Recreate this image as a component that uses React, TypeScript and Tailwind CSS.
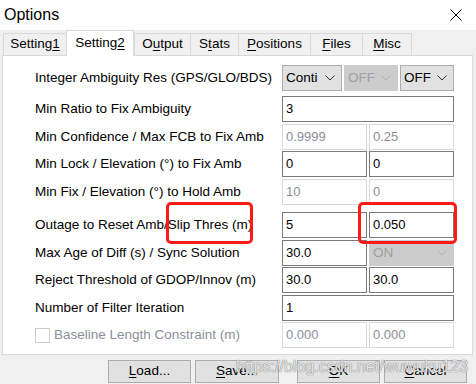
import React from 'react';

// Options dialog, "Setting2" tab

const Chevron = ({ color = '#333' }: { color?: string }) => (
  <svg width="10" height="6" viewBox="0 0 10 6" fill="none">
    <path d="M0.5 0.5 L5 5 L9.5 0.5" stroke={color} strokeWidth="1" />
  </svg>
);

const U = ({ children }: { children: React.ReactNode }) => <span className="underline underline-offset-2">{children}</span>;

interface TabProps {
  w: string;
  active?: boolean;
  last?: boolean;
  children: React.ReactNode;
}

const Tab = ({ w, active, last, children }: TabProps) => (
  <div
    className={`${w} flex items-center justify-center text-[13.5px] border-t border-l border-[#d9d9d9] ${
      active ? 'h-[26px] bg-white border-r -mb-px relative z-10' : 'h-[22px] bg-[#f0f0f0]'
    } ${last ? 'border-r' : ''}`}
  >
    <span>{children}</span>
  </div>
);

const Input = ({ value, w, disabled }: { value: string; w: string; disabled?: boolean }) => (
  <div
    className={`${w} h-full flex items-center px-[3px] text-[13px] border ${
      disabled ? 'border-[#d9d9d9] text-[#8a8f99]' : 'border-[#7a7a7a] text-black'
    }`}
  >
    {value}
  </div>
);

const Select = ({ value, w, disabled }: { value: string; w: string; disabled?: boolean }) => (
  <div
    className={`${w} h-full flex items-center justify-between pl-[3px] pr-[6px] text-[13.5px] border ${
      disabled ? 'bg-[#cccccc] border-[#cccccc] text-[#a0a0a0]' : 'bg-[#e1e1e1] border-[#adadad] text-black'
    }`}
  >
    <span>{value}</span>
    <Chevron color={disabled ? '#b0b0b0' : '#333'} />
  </div>
);

const Row = ({ label, mt, h = 'h-[26px]', children }: { label: React.ReactNode; mt: string; h?: string; children: React.ReactNode }) => (
  <div className={`flex items-center ${mt} ${h}`}>
    <div className="w-[247px] text-[13.5px] text-black whitespace-nowrap">{label}</div>
    <div className="flex h-full gap-[2px]">{children}</div>
  </div>
);

const Button = ({ children, w, ml }: { children: React.ReactNode; w: string; ml: string }) => (
  <div className={`${w} ${ml} h-[23px] flex items-center justify-center bg-[#e1e1e1] border border-[#adadad] text-[13.5px]`}>
    {children}
  </div>
);

export default function App() {
  return (
    <div className="relative w-[476px] h-[384px] overflow-hidden bg-[#f0f0f0] text-black font-['Liberation_Sans',Arial,sans-serif]">
      {/* title bar */}
      <div className="h-[30px] bg-white flex items-center justify-between pl-[4px] pr-[14px]">
        <span className="text-[16px]">Options</span>
        <svg width="12" height="12" viewBox="0 0 12 12">
          <path d="M0.5 0.5 L11.5 11.5 M11.5 0.5 L0.5 11.5" stroke="#111" strokeWidth="1" />
        </svg>
      </div>

      {/* tabs */}
      <div className="h-[25px] flex items-end pl-[3px]">
        <Tab w="w-[63px]">Setting<U>1</U></Tab>
        <Tab w="w-[68px]" active>Setting<U>2</U></Tab>
        <Tab w="w-[56px]">O<U>u</U>tput</Tab>
        <Tab w="w-[48px]">S<U>t</U>ats</Tab>
        <Tab w="w-[72px]"><U>P</U>ositions</Tab>
        <Tab w="w-[52px]"><U>F</U>iles</Tab>
        <Tab w="w-[50px]" last><U>M</U>isc</Tab>
      </div>

      {/* panel */}
      <div className="ml-[2px] w-[471px] h-[300px] bg-white border border-[#d9d9d9] pt-[9px] pl-[32px]">
        <Row label="Integer Ambiguity Res (GPS/GLO/BDS)" mt="mt-0" h="h-[26px]">
          <Select value="Conti" w="w-[60px]" />
          <Select value="OFF" w="w-[54px]" disabled />
          <Select value="OFF" w="w-[54px]" />
        </Row>
        <Row label="Min Ratio to Fix Ambiguity" mt="mt-[5px]">
          <Input value="3" w="w-[172px]" />
        </Row>
        <Row label="Min Confidence / Max FCB to Fix Amb" mt="mt-[2px]">
          <Input value="0.9999" w="w-[85px]" disabled />
          <Input value="0.25" w="w-[85px]" disabled />
        </Row>
        <Row label="Min Lock / Elevation (°) to Fix Amb" mt="mt-[1px]">
          <Input value="0" w="w-[85px]" />
          <Input value="0" w="w-[85px]" />
        </Row>
        <Row label="Min Fix / Elevation (°) to Hold Amb" mt="mt-[2px]">
          <Input value="10" w="w-[85px]" disabled />
          <Input value="0" w="w-[85px]" disabled />
        </Row>
        <Row label="Outage to Reset Amb/Slip Thres (m)" mt="mt-[7px]">
          <Input value="5" w="w-[85px]" />
          <Input value="0.050" w="w-[85px]" />
        </Row>
        <Row label="Max Age of Diff (s) / Sync Solution" mt="mt-[2px]">
          <Input value="30.0" w="w-[85px]" />
          <Select value="ON" w="w-[85px]" disabled />
        </Row>
        <Row label="Reject Threshold of GDOP/Innov (m)" mt="mt-[1px]">
          <Input value="30.0" w="w-[85px]" />
          <Input value="30.0" w="w-[85px]" />
        </Row>
        <Row label="Number of Filter Iteration" mt="mt-[2px]">
          <Input value="1" w="w-[172px]" />
        </Row>
        <Row
          mt="mt-[1px]"
          label={
            <div className="flex items-center gap-[4px] text-[#8a8f99]">
              <div className="w-[15px] h-[15px] border border-[#cccccc] bg-white" />
              <span>Baseline Length Constraint (m)</span>
            </div>
          }
        >
          <Input value="0.000" w="w-[85px]" disabled />
          <Input value="0.000" w="w-[85px]" disabled />
        </Row>
      </div>

      {/* buttons */}
      <div className="flex pt-[5px]">
        <Button w="w-[83px]" ml="ml-[108px]"><U>L</U>oad...</Button>
        <Button w="w-[84px]" ml="ml-[4px]"><U>S</U>ave...</Button>
        <Button w="w-[83px]" ml="ml-[18px]"><U>O</U>K</Button>
        <Button w="w-[83px]" ml="ml-[4px]"><U>C</U>ancel</Button>
      </div>

      {/* annotation boxes */}
      <div className="absolute left-[166px] top-[202px] w-[87px] h-[42px] border-[3px] border-[#ff1a1a] rounded-[5px]" />
      <div className="absolute left-[358px] top-[202px] w-[99px] h-[42px] border-[3px] border-[#ff1a1a] rounded-[5px]" />

      {/* watermark */}
      <div className="absolute left-[236px] top-[355px] text-[16px] text-white/80 [text-shadow:0_0_1px_#777,0_0_1px_#777] whitespace-nowrap">
        https://blog.csdn.net/wuwuku123
      </div>
    </div>
  );
}
